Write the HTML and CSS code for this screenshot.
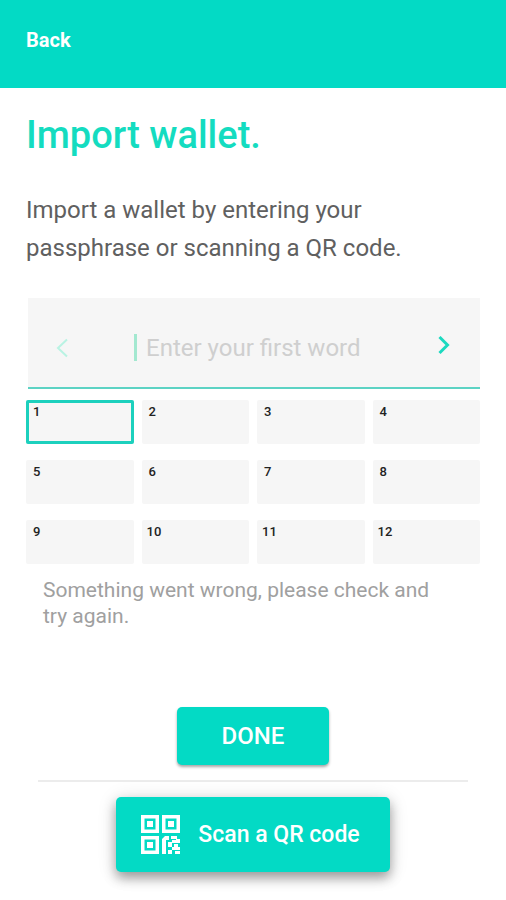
FILE: index.html
```html
<!DOCTYPE html>
<html lang="en">
<head>
<meta charset="utf-8">
<meta name="viewport" content="width=device-width, initial-scale=1">
<title>Import wallet</title>
<link rel="stylesheet" href="styles.css">
</head>
<body>
<header class="topbar"><a class="back" href="#">Back</a></header>
<main class="page">
  <h1 class="title">Import wallet.</h1>
  <p class="intro">Import a wallet by entering your passphrase or scanning a QR code.</p>

  <form class="entry">
    <button class="step prev" type="button" aria-label="Previous word" disabled>
      <svg viewBox="0 0 12 20" width="12" height="20"><path d="M11 1.5 2 10l9 8.5"/></svg>
    </button>
    <span class="caret"></span>
    <input class="word" type="text" aria-label="Passphrase word" placeholder="Enter your first word">
    <button class="step next" type="button" aria-label="Next word">
      <svg viewBox="0 0 12 20" width="12" height="20"><path d="M1.5 2 9.5 10l-8 8"/></svg>
    </button>
  </form>

  <div class="words">
    <button class="cell active" type="button">1</button>
    <button class="cell" type="button">2</button>
    <button class="cell" type="button">3</button>
    <button class="cell" type="button">4</button>
    <button class="cell" type="button">5</button>
    <button class="cell" type="button">6</button>
    <button class="cell" type="button">7</button>
    <button class="cell" type="button">8</button>
    <button class="cell" type="button">9</button>
    <button class="cell wide" type="button">10</button>
    <button class="cell wide" type="button">11</button>
    <button class="cell wide" type="button">12</button>
  </div>
  <p class="message">Something went wrong, please check and try again.</p>

  <div class="actions">
    <button class="btn done" type="button">DONE</button>
    <hr class="rule">
    <button class="btn scan" type="button">
      <svg class="qr" viewBox="0 0 39 39" width="39" height="39" aria-hidden="true">
        <path d="M1.75 1.75h14.5v14.5H1.75zM22.75 1.75h14.5v14.5h-14.5zM1.75 22.75h14.5v14.5H1.75z" fill="none" stroke="#fff" stroke-width="3.5"/>
        <g fill="#fff">
          <path d="M6 6h6v6H6zM27 6h6v6h-6zM6 27h6v6H6z"/>
          <path d="M21 24l3-3h4v4h-3v14h-4zM30 21h6v3h-6zM27 27h4v5h-4zM31 25h4v3h-4zM35 24h4v4h-4zM33 29h4v3h-4zM31 32h4v3h-4zM35 32h4v3h-4zM27 35h4v4h-4zM34 36h5v3h-5z"/>
        </g>
      </svg>
      <span>Scan a QR code</span>
    </button>
  </div>
</main>
</body>
</html>
```
FILE: styles.css
```css
* { box-sizing: border-box; }

body {
  margin: 0;
  background: #fff;
  font-family: Roboto, "Liberation Sans", sans-serif;
  color: #606060;
}

button, input { font: inherit; border: 0; margin: 0; padding: 0; }

.topbar {
  height: 88px;
  padding: 28px 26px;
  background: #03dac5;
}

.back {
  display: block;
  width: max-content;
  font-size: 20px;
  line-height: 24px;
  font-weight: 700;
  color: #fff;
  text-decoration: none;
}

.page { padding: 25px 26px 28px; }

.title {
  margin: 0;
  font-size: 38px;
  line-height: 44px;
  font-weight: 500;
  color: #14dcc0;
}

.intro {
  margin: 34px 60px 31px 0;
  font-size: 24px;
  line-height: 38px;
}

.entry {
  display: flex;
  align-items: center;
  height: 91px;
  margin-left: 2px;
  padding: 10px 28px 0;
  background: #f6f6f6;
  border-bottom: 2px solid #5cd3c4;
}

.step {
  width: 12px;
  height: 20px;
  background: none;
}

.step svg { display: block; fill: none; stroke: currentColor; }
.prev { color: #b9f3e3; stroke-width: 2px; }
.next { margin: 0 2px 6px 0; color: #1cd9bf; stroke-width: 3px; }

.caret {
  width: 3px;
  height: 27px;
  margin: 0 9px 0 66px;
  background: #a3e8d0;
}

.word {
  flex: 1;
  min-width: 0;
  font-size: 24px;
  line-height: 28px;
  background: none;
  outline: 0;
}

.word::placeholder { color: #cfcfcf; opacity: 1; }

.words {
  display: grid;
  grid-template-columns: repeat(4, 1fr);
  gap: 16px 8px;
  margin-top: 11px;
}

.cell {
  display: flex;
  align-items: flex-start;
  height: 44px;
  padding: 4px 7px;
  font-size: 13px;
  line-height: 16px;
  font-weight: 500;
  text-align: left;
  color: #222;
  background: #f6f6f6;
  border-radius: 2px;
}

.wide { padding-left: 5px; }
.active { box-shadow: inset 0 0 0 3px #1cd0bd; }

.message {
  margin: 13px 36px 0 17px;
  font-size: 21px;
  line-height: 26px;
  color: #a0a0a0;
}

.actions {
  display: flex;
  flex-direction: column;
  align-items: center;
  margin-top: 78px;
}

.btn {
  color: #fff;
  background: #03dac5;
  border-radius: 5px;
  font-weight: 500;
}

.done {
  min-width: 152px;
  height: 58px;
  font-size: 24px;
  box-shadow: 0 2px 3px rgba(0, 0, 0, .35);
}

.rule {
  align-self: stretch;
  height: 2px;
  margin: 15px 12px;
  border: 0;
  background: #ececec;
}

.scan {
  display: flex;
  align-items: center;
  gap: 18px;
  height: 75px;
  padding: 0 30px 0 25px;
  font-size: 23px;
  box-shadow: 0 6px 12px rgba(0, 0, 0, .35), 0 2px 20px rgba(0, 0, 0, .12);
}
```
